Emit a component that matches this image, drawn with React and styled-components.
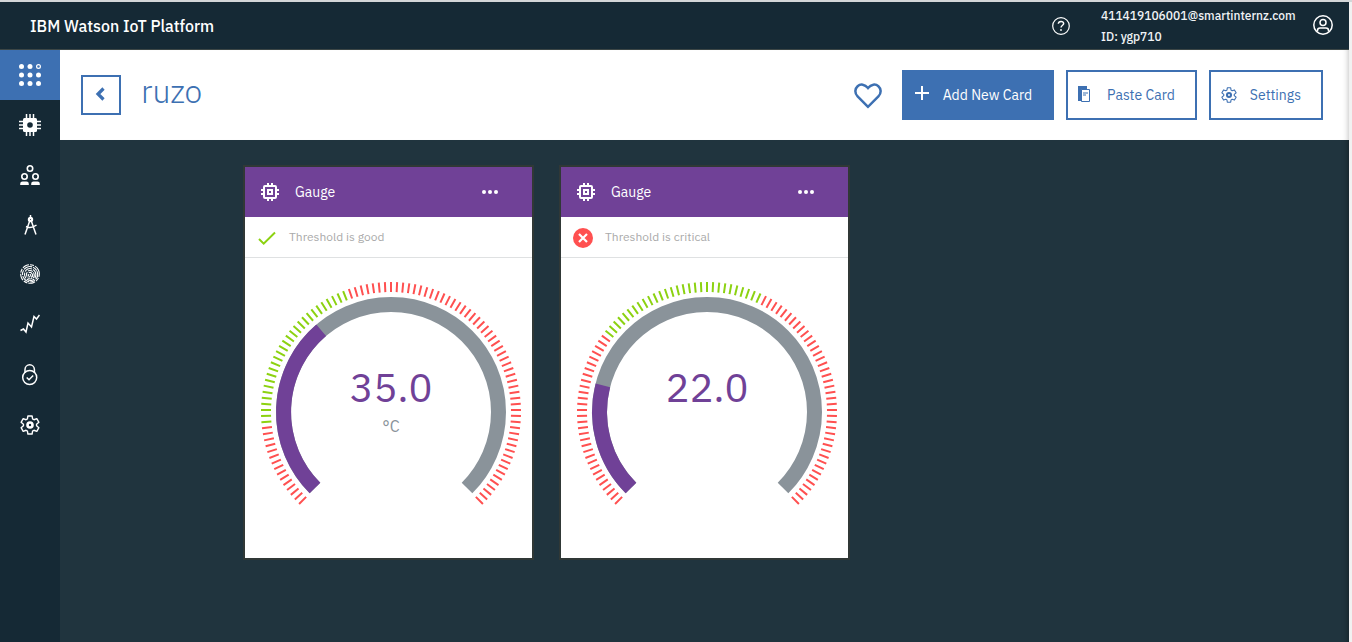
import React from "react";
import styled, { createGlobalStyle, css } from "styled-components";

const sans = `"IBM Plex Sans", "Noto Sans", "Open Sans", sans-serif`;

const color = {
  ink: "#152935",
  canvas: "#20343e",
  blue: "#3d70b2",
  purple: "#704197",
  track: "#8a939a",
  good: "#8cd211",
  bad: "#ff5050",
};

const GlobalStyle = createGlobalStyle`
  * { box-sizing: border-box; }
  body { margin: 0; font-family: ${sans}; background: #f1f1f1; }
  button { font-family: inherit; cursor: pointer; }
  svg { display: block; flex: none; }
`;

const Page = styled.div`
  min-height: 100vh;
  display: flex;
  flex-direction: column;
  border-top: 2px solid #d3d6d8;
  padding-right: 3px;
`;

const TopBar = styled.header`
  height: 48px;
  display: flex;
  align-items: center;
  padding: 0 16px 0 30px;
  background: ${color.ink};
  border-bottom: 1px solid #3c4646;
  color: #fff;
`;

const Brand = styled.a`
  margin-right: auto;
  font-size: 16px;
  line-height: 20px;
  color: #fff;
  text-decoration: none;
  font-weight: 500;
`;

const IconButton = styled.button`
  display: flex;
  border: 0;
  padding: 0;
  background: none;
  color: inherit;
`;

const Account = styled.div`
  width: 192px;
  margin: 0 20px 0 31px;
  font-size: 12px;
  line-height: 21px;
  font-weight: 500;
  white-space: nowrap;
  color: #f0f3f5;
`;

const Body = styled.div`
  flex: 1;
  display: flex;
`;

const SideNav = styled.nav`
  width: 60px;
  flex: none;
  background: ${color.ink};
`;

const NavLink = styled.a`
  height: 50px;
  display: flex;
  align-items: center;
  justify-content: center;
  color: #fff;
  background: ${(p) => (p.$active ? color.blue : "transparent")};
`;

const Main = styled.main`
  flex: 1;
  min-width: 0;
  background: ${color.canvas};
  box-shadow: inset -6px 0 6px -6px rgba(0, 0, 0, 0.5);
`;

const BoardHeader = styled.div`
  height: 90px;
  display: flex;
  align-items: center;
  padding: 0 26px 0 21px;
  background: #fff;
  box-shadow: inset -6px 0 6px -6px rgba(0, 0, 0, 0.3);
  color: ${color.blue};
`;

const BackButton = styled(IconButton)`
  width: 40px;
  height: 40px;
  align-items: center;
  justify-content: center;
  padding: 0 2px 2px 0;
  border: 2px solid ${color.blue};
`;

const Title = styled.h1`
  margin: 0 auto 8px 20px;
  font-size: 32px;
  line-height: 40px;
  font-weight: 300;
`;

const Actions = styled.div`
  display: flex;
  align-items: center;
  gap: 12px;
`;

const Favorite = styled(IconButton)`
  margin-right: 8px;
  padding-top: 2px;
`;

const ActionButton = styled.button`
  height: 50px;
  display: flex;
  align-items: center;
  gap: 13px;
  padding: 0 20px 0 10px;
  border: 2px solid ${color.blue};
  background: #fff;
  color: ${color.blue};
  font-size: 14px;
  line-height: 20px;
  white-space: nowrap;
  ${(p) =>
    p.$primary &&
    css`
      background: ${color.blue};
      color: #fff;
    `}
`;

const Cards = styled.div`
  display: flex;
  gap: 29px;
  padding: 27px 185px;
`;

const Card = styled.article`
  width: 287px;
  height: 391px;
  background: #fff;
  box-shadow: 0 0 0 2px #303836;
`;

const CardHead = styled.header`
  height: 50px;
  display: flex;
  align-items: center;
  padding: 0 34px 0 16px;
  background: ${color.purple};
  color: #fff;
`;

const CardTitle = styled.h2`
  margin: 0 auto 0 16px;
  font-size: 14px;
  line-height: 20px;
  font-weight: 400;
`;

const Status = styled.p`
  height: 41px;
  margin: 0;
  display: flex;
  align-items: center;
  gap: 12px;
  padding: 0 12px;
  border-bottom: 1px solid #dfe1e2;
  font-size: 12px;
  line-height: 16px;
  color: #aaa;
  svg { margin-top: 2px; }
`;

const GaugeBox = styled.div`
  display: grid;
  justify-content: center;
  padding: 24px 0 0 5px;
  > * { grid-area: 1 / 1; }
`;

const Reading = styled.div`
  padding-top: 80px;
  text-align: center;
  color: ${color.purple};
  font-size: 40px;
  line-height: 50px;
`;

const Unit = styled.div`
  font-size: 16px;
  line-height: 28px;
  color: ${color.track};
`;

const CENTER = 130;

function point(radius, value) {
  const a = ((value * 2.7 - 135) * Math.PI) / 180;
  return [CENTER + radius * Math.sin(a), CENTER - radius * Math.cos(a)];
}

function arc(from, to) {
  const [x1, y1] = point(107.5, from);
  const [x2, y2] = point(107.5, to);
  const large = (to - from) * 2.7 > 180 ? 1 : 0;
  return `M${x1} ${y1}A107.5 107.5 0 ${large} 1 ${x2} ${y2}`;
}

function ticks(test) {
  let d = "";
  for (let i = 0; i <= 100; i++) {
    if (test(i)) d += `M${point(120, i).join(" ")}L${point(130, i).join(" ")}`;
  }
  return d;
}

function GaugeDial({ value, good }) {
  const isGood = (i) => i >= good[0] && i <= good[1];
  return (
    <svg width="260" height="260" fill="none" aria-hidden="true">
      <path d={ticks(isGood)} stroke={color.good} strokeWidth="2" />
      <path d={ticks((i) => !isGood(i))} stroke={color.bad} strokeWidth="2" />
      <path d={arc(0, 100)} stroke={color.track} strokeWidth="15" />
      <path d={arc(0, value)} stroke={color.purple} strokeWidth="15" />
    </svg>
  );
}

// Six-toothed gear outline: each tooth has two valley points and two tip points.
const gearPoints = [0, 60, 120, 180, 240, 300]
  .flatMap((t) => [
    [t - 23, 6.6],
    [t - 13, 9.3],
    [t + 13, 9.3],
    [t + 23, 6.6],
  ])
  .map(([deg, r]) => {
    const a = (deg * Math.PI) / 180;
    return `${(10 + r * Math.sin(a)).toFixed(2)},${(10 - r * Math.cos(a)).toFixed(2)}`;
  })
  .join(" ");

const GearIcon = ({ size }) => (
  <svg width={size} height={size} viewBox="0 0 20 20" fill="none" stroke="currentColor" strokeWidth="1.4" strokeLinejoin="round">
    <polygon points={gearPoints} />
    <circle cx="10" cy="10" r="2.5" strokeWidth="2.6" />
  </svg>
);

const BoardsIcon = () => (
  <svg width="22" height="22" fill="currentColor">
    {[2.5, 11, 19.5].map((y) =>
      [2.5, 11, 19.5].map((x) =>
        x > 12 && y < 5 ? (
          <circle key="open" cx={x} cy={y} r="1.9" fill="none" stroke="currentColor" strokeWidth="1.2" />
        ) : (
          <circle key={`${x}-${y}`} cx={x} cy={y} r="2.5" />
        )
      )
    )}
  </svg>
);

const DevicesIcon = () => (
  <svg width="22" height="22">
    <path d="M7.5 0v22M11 0v22M14.5 0v22M0 7.5h22M0 11h22M0 14.5h22" stroke="currentColor" strokeWidth="1.5" />
    <rect x="4" y="4" width="14" height="14" rx="1.5" fill="currentColor" />
    <circle cx="11" cy="11" r="2.8" fill={color.ink} />
  </svg>
);

const MembersIcon = () => (
  <svg width="20" height="20" fill="none" stroke="currentColor" strokeWidth="1.6">
    <circle cx="10" cy="3.5" r="2.7" />
    <circle cx="4.5" cy="11.5" r="2.7" />
    <circle cx="15.5" cy="11.5" r="2.7" />
    <path d="M.2 20v-1.200q0-2.300 2.300-2.300h4q2.300 0 2.300 2.300V20zM11.200 20v-1.200q0-2.300 2.300-2.300h4q2.300 0 2.300 2.300V20z" fill="currentColor" stroke="none" />
  </svg>
);

const CompassIcon = () => (
  <svg width="20" height="20" fill="none" stroke="currentColor" strokeWidth="1.5">
    <path d="M10.500 0v3M9.700 6 5 19.500M11.300 6 16 19.500M6 11.500q5 2.500 10.500-1.500" />
    <circle cx="10.500" cy="4.500" r="1.600" strokeWidth="2.200" />
  </svg>
);

const FingerprintIcon = () => (
  <svg width="20" height="22" fill="none" stroke="currentColor" strokeWidth="1.1">
    <g transform="rotate(-25 10 10)">
      <circle cx="10" cy="10" r="9.3" strokeDasharray="7 1 4 1.200" />
      <ellipse cx="10" cy="10.200" rx="7.500" ry="7.700" strokeDasharray="9 1 5 1" />
      <ellipse cx="10" cy="10.500" rx="5.600" ry="6" strokeDasharray="6 1 8 1" />
      <ellipse cx="10" cy="10.800" rx="3.800" ry="4.300" strokeDasharray="5 1" />
      <ellipse cx="10" cy="11" rx="2" ry="2.600" strokeDasharray="4 1" />
      <path d="M10 10v3" />
    </g>
  </svg>
);

const UsageIcon = () => (
  <svg width="20" height="22" fill="none" stroke="currentColor" strokeWidth="1.5">
    <path d="m.5 16.500 3-1.500L6 18 8 9l3.500 4L14 2.500 16.500 5 19.500 1" />
  </svg>
);

const LockIcon = () => (
  <svg width="21" height="22" fill="none" stroke="currentColor" strokeWidth="1.5">
    <path d="M5 9V5.500a4.700 4.700 0 0 1 9.400 0V9" />
    <circle cx="9.700" cy="13.500" r="7" />
    <path d="m6.700 13.500 2.300 2.200 4.200-4.200" />
  </svg>
);

const ChipIcon = () => (
  <svg width="18" height="18" fill="none" stroke="currentColor" strokeWidth="2">
    <rect x="3" y="3" width="12" height="12" rx="1" />
    <path d="M7 0v3M11 0v3M7 15v3M11 15v3M0 7h3M0 11h3M15 7h3M15 11h3" />
    <rect x="7" y="7" width="4" height="4" />
  </svg>
);

const HelpIcon = () => (
  <svg width="18" height="18" fill="none" stroke="currentColor" strokeWidth="1.2">
    <circle cx="9" cy="9" r="8.300" />
    <path d="M6.300 6.800q.2-2.300 2.700-2.300t2.700 2.100c0 1.700-2.700 1.700-2.700 4" strokeWidth="1.400" />
    <circle cx="9" cy="13" r=".9" fill="currentColor" stroke="none" />
  </svg>
);

const UserIcon = () => (
  <svg width="20" height="22" fill="none" stroke="currentColor" strokeWidth="1.5">
    <circle cx="10" cy="10" r="9.200" />
    <circle cx="10" cy="7.500" r="3" />
    <path d="M4.500 16.500v-1q0-2.500 2.500-2.500h6q2.500 0 2.500 2.500v1" />
  </svg>
);

const HeartIcon = () => (
  <svg width="28" height="26" fill="none" stroke="currentColor" strokeWidth="2.5">
    <path d="M14 23.800 3.600 13.400C.3 10 1 5.500 3.600 3.200 6.500.7 10.800 1.100 14 5c3.200-3.900 7.500-4.300 10.400-1.800C27 5.500 27.700 10 24.400 13.400z" />
  </svg>
);

const PasteIcon = () => (
  <svg width="16" height="18">
    <path d="M0 0h9v4H4v11H0z" fill="currentColor" />
    <path d="M3.500 3.500h8v12h-8z" fill="#fff" stroke="currentColor" strokeWidth="1" />
    <path d="M5 6h5v2H8v2H5z" fill="#9db8d9" />
  </svg>
);

const PlusIcon = () => (
  <svg width="16" height="18" stroke="currentColor" strokeWidth="2">
    <path d="M8 0v14M1 7h14" />
  </svg>
);

const BackIcon = () => (
  <svg width="10" height="14" fill="none" stroke="currentColor" strokeWidth="3.2">
    <path d="M8.500 1.500 3 7l5.500 5.500" />
  </svg>
);

const MoreIcon = () => (
  <svg width="16" height="4" fill="currentColor">
    <circle cx="2" cy="2" r="2" />
    <circle cx="8" cy="2" r="2" />
    <circle cx="14" cy="2" r="2" />
  </svg>
);

const GoodIcon = () => (
  <svg width="20" height="20" fill="none" stroke={color.good} strokeWidth="2">
    <path d="m2 11 4.700 4.700L18 4.500" />
  </svg>
);

const CriticalIcon = () => (
  <svg width="20" height="20">
    <circle cx="10" cy="10" r="10" fill={color.bad} />
    <path d="m6 6 8 8M14 6l-8 8" stroke="#fff" strokeWidth="2.200" />
  </svg>
);

const navItems = [
  ["Boards", BoardsIcon],
  ["Devices", DevicesIcon],
  ["Members", MembersIcon],
  ["Apps", CompassIcon],
  ["Access management", FingerprintIcon],
  ["Usage", UsageIcon],
  ["Security", LockIcon],
  ["Settings", GearIcon],
];

const gauges = [
  { id: "a", value: 35, unit: "°C", good: [15, 42], status: "Threshold is good", Icon: GoodIcon },
  { id: "b", value: 22, good: [31, 59], status: "Threshold is critical", Icon: CriticalIcon },
];

export default function App() {
  return (
    <>
      <GlobalStyle />
      <Page>
        <TopBar>
          <Brand href="#">IBM Watson IoT Platform</Brand>
          <IconButton aria-label="Help"><HelpIcon /></IconButton>
          <Account>
            <div>411419106001@smartinternz.com</div>
            <div>ID: ygp710</div>
          </Account>
          <IconButton aria-label="Account"><UserIcon /></IconButton>
        </TopBar>
        <Body>
          <SideNav>
            {navItems.map(([label, Icon], i) => (
              <NavLink key={label} href="#" aria-label={label} $active={i === 0}>
                <Icon size={20} />
              </NavLink>
            ))}
          </SideNav>
          <Main>
            <BoardHeader>
              <BackButton aria-label="Back"><BackIcon /></BackButton>
              <Title>ruzo</Title>
              <Actions>
                <Favorite aria-label="Favorite"><HeartIcon /></Favorite>
                <ActionButton $primary><PlusIcon />Add New Card</ActionButton>
                <ActionButton><PasteIcon />Paste Card</ActionButton>
                <ActionButton><GearIcon size={16} />Settings</ActionButton>
              </Actions>
            </BoardHeader>
            <Cards>
              {gauges.map(({ id, value, unit, good, status, Icon }) => (
                <Card key={id}>
                  <CardHead>
                    <ChipIcon />
                    <CardTitle>Gauge</CardTitle>
                    <IconButton aria-label="More"><MoreIcon /></IconButton>
                  </CardHead>
                  <Status><Icon />{status}</Status>
                  <GaugeBox>
                    <GaugeDial value={value} good={good} />
                    <Reading>
                      {value.toFixed(1)}
                      {unit && <Unit>{unit}</Unit>}
                    </Reading>
                  </GaugeBox>
                </Card>
              ))}
            </Cards>
          </Main>
        </Body>
      </Page>
    </>
  );
}
